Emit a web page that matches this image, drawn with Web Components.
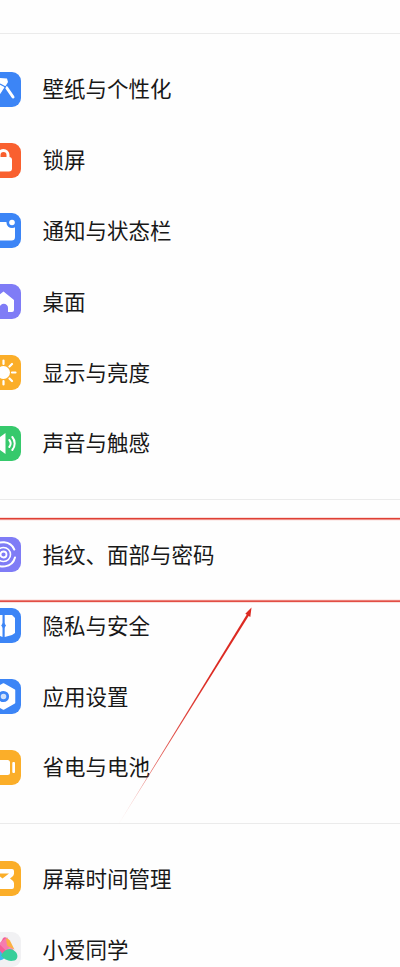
<!DOCTYPE html>
<html lang="zh-CN"><head><meta charset="utf-8"><title>设置</title>
<style>
html,body{margin:0;padding:0;background:#fff}
body{width:400px;height:967px;overflow:hidden;position:relative;font-family:"Noto Sans CJK SC","Noto Sans",sans-serif}
</style></head><body>
<settings-page>
  <settings-group top="33" before="20" after="20.2">
    <settings-row icon="brush" color="#3c85f6">壁纸与个性化</settings-row>
    <settings-row icon="lock" color="#f9602f">锁屏</settings-row>
    <settings-row icon="notify" color="#3c85f6">通知与状态栏</settings-row>
    <settings-row icon="home" color="#7f7cf6">桌面</settings-row>
    <settings-row icon="sun" color="#fbae29">显示与亮度</settings-row>
    <settings-row icon="sound" color="#36c96c">声音与触感</settings-row>
  </settings-group>
  <settings-group before="19.6" after="20.2">
    <settings-row icon="finger" color="#7f7cf6">指纹、面部与密码</settings-row>
    <settings-row icon="privacy" color="#3c85f6">隐私与安全</settings-row>
    <settings-row icon="apps" color="#3c85f6">应用设置</settings-row>
    <settings-row icon="battery" color="#fbae29">省电与电池</settings-row>
  </settings-group>
  <settings-group before="19.6" after="0">
    <settings-row icon="hourglass" color="#fbae29">屏幕时间管理</settings-row>
    <settings-row icon="xiaoai" color="#f1f1f3">小爱同学</settings-row>
  </settings-group>
  <call-out></call-out>
</settings-page>
<script>
const ICONS={
brush:`<path d="M20.500 15.500 27 25" stroke="#fff" stroke-width="3" stroke-linecap="round"/><path d="M4 5 21 6.500 22 10 15.500 21 4 27Z" fill="#fff"/><path d="M14 12 19.500 15" stroke="#3c85f6" stroke-width="1.300"/><path d="M15.200 21.500 20 14" stroke="#3c85f6" stroke-width="1.200"/>`,
lock:`<path d="M13 15V12a4.500 4.500 0 0 1 9 0V15" fill="none" stroke="#fff" stroke-width="3"/><rect x="9" y="14" width="17" height="14.500" rx="3" fill="#fff"/>`,
notify:`<rect x="4" y="9" width="25" height="18.500" rx="3.500" fill="#fff"/><circle cx="26" cy="9.500" r="5.500" fill="#3c85f6"/><circle cx="26" cy="9.500" r="2.800" fill="#fff"/>`,
home:`<path d="M17.500 7.500 28 16v10a2 2 0 0 1-2 2h-4v-4a4.200 4.200 0 0 0-8.400 0v4H9a2 2 0 0 1-2-2V16Z" fill="#fff"/>`,
sun:`<circle cx="17.500" cy="17.500" r="6.500" fill="#fff"/><path d="M17.500 5.500v3.500M17.500 26v3.500M5.500 17.500H9M26 17.500h3.500M9 9l2.500 2.500M23.500 23.500 26 26M9 26l2.500-2.500M23.500 11.500 26 9" stroke="#fff" stroke-width="2.200" stroke-linecap="round"/>`,
sound:`<path d="M5 12.500h7l7.500-5.500v21L12 22.500H5Z" fill="#fff"/><path d="M23.300 14a5.500 5.500 0 0 1 0 7M26.300 11a10 10 0 0 1 0 13" fill="none" stroke="#fff" stroke-width="2" stroke-linecap="round"/>`,
finger:`<circle cx="17.500" cy="17.500" r="3" fill="none" stroke="#fff" stroke-width="1.800"/><circle cx="17.500" cy="17.500" r="7" fill="none" stroke="#fff" stroke-width="1.600"/><path d="M7 11a12 12 0 0 1 21.300 1.500M29 20.500a12 12 0 0 1-22 3" fill="none" stroke="#fff" stroke-width="2" stroke-linecap="round"/>`,
privacy:`<path d="M16.500 7H7L5 9v10c0 5 6 8 11.500 10Z" fill="#fff"/><path d="M18.700 7H26l3 3v15l-3 2-7.300 2Z" fill="#fff"/><path d="M17.600 14 20 17.500 17.600 21 15.200 17.500Z" fill="#3c85f6"/>`,
apps:`<path d="M17.500 5 28.500 11.200V23.800L17.500 30 6.500 23.800V11.200Z" fill="#fff" stroke="#fff" stroke-width="1.500" stroke-linejoin="round"/><circle cx="17.500" cy="17.500" r="4.200" fill="#cfe0fb" stroke="#3c85f6" stroke-width="2.800"/>`,
battery:`<rect x="4" y="10" width="20" height="15" rx="2.500" fill="#fff"/><rect x="26.300" y="12" width="2.700" height="11" rx="1" fill="#fff"/>`,
hourglass:`<path d="M6 8h20a2 2 0 0 1 2 2v2.500a4 4 0 0 1-1.500 3l-2.500 2 2.500 2a4 4 0 0 1 1.500 3V26a2 2 0 0 1-2 2H6Z" fill="#fff"/><path d="M10 12.500H23L16.500 17.500Z" fill="#fbae29"/><path d="M6 18 14 18 6 24Z" fill="#fbae29"/>`,
xiaoai:`<g transform="translate(17.500 17.500) scale(1.220) translate(-17 -18)"><path d="M8 25 16.500 9q1.500-2 3.500 0l3 5-7 11Z" fill="#f45e97"/><path d="M13 13 20 8l8 16h-4Z" fill="#f57fb1" opacity=".9"/><path d="M5 21c3-4 7-4 10-1l3 5c-3 3-9 3-13-4Z" fill="#3db7f0"/><path d="M15 23c3-6 8-7 12-3 2 2 2 6-1 7-4 1-8 0-11-4Z" fill="#37cf9a"/><path d="M19 9c2 0 3 1 4 3l3 6-6-3Z" fill="#fbb043"/></g>`
};
function tpl(html){const t=document.createElement('template');t.innerHTML=html;return t;}

const pageT=tpl(`<style>:host{display:block;width:400px;height:967px;overflow:hidden;position:relative;background:#fefefe;color:#181818;font-family:"Noto Sans CJK SC","Noto Sans",sans-serif}</style><slot></slot>`);
customElements.define('settings-page',class extends HTMLElement{constructor(){super();this.attachShadow({mode:'open'}).append(pageT.content.cloneNode(true));}});

class Group extends HTMLElement{
  constructor(){super();this.attachShadow({mode:'open'});}
  connectedCallback(){
    const top=this.getAttribute('top')||0,b=this.getAttribute('before')||20,a=this.getAttribute('after')||0;
    this.shadowRoot.innerHTML=`<style>:host{display:block;margin-top:${top}px;border-top:1px solid #ebebeb;padding:${b}px 0 ${a}px}</style><slot></slot>`;
  }
}
customElements.define('settings-group',Group);

class Row extends HTMLElement{
  constructor(){super();this.attachShadow({mode:'open'});}
  connectedCallback(){
    const c=this.getAttribute('color'),i=ICONS[this.getAttribute('icon')]||'';
    this.shadowRoot.innerHTML=`<style>
    :host{display:flex;align-items:center;height:70.8px;margin-left:-14px}
    .ic{flex:none;width:35px;height:35px;border-radius:9px;background:${c};margin-right:21.5px;overflow:hidden}
    svg{display:block}
    .t{font-size:21.500px;line-height:30px;white-space:nowrap;position:relative;top:-1px}
    </style><div class="ic"><svg width="35" height="35" viewBox="0 0 35 35">${i}</svg></div><span class="t"><slot></slot></span>`;
  }
}
customElements.define('settings-row',Row);

class CallOut extends HTMLElement{
  constructor(){super();this.attachShadow({mode:'open'}).innerHTML=`<style>
  :host{position:absolute;inset:0;display:block;pointer-events:none}
  svg{position:absolute;left:0;top:0}
  </style><svg width="400" height="967" viewBox="0 0 400 967">
  <defs><linearGradient id="g" gradientUnits="userSpaceOnUse" x1="118" y1="825" x2="250" y2="610">
  <stop offset="0" stop-color="#e8706a" stop-opacity=".25"/><stop offset=".25" stop-color="#dc3a32" stop-opacity=".8"/><stop offset=".7" stop-color="#dc2a22"/><stop offset="1" stop-color="#dc2a22"/></linearGradient></defs>
  <rect x="0" y="517" width="400" height="3.500" fill="#f4a49c" opacity=".35"/>
  <rect x="0" y="599.400" width="400" height="3.500" fill="#f4a49c" opacity=".35"/>
  <rect x="0" y="518" width="400" height="1.500" fill="#df3f35"/>
  <rect x="0" y="600.400" width="400" height="1.500" fill="#df3f35"/>
  <path d="M118 825 248 612.500 250 613.700Z" fill="url(#g)"/>
  <path d="M251.500 607.500 250.300 617 245.300 613.800Z" fill="#dc2a22"/>
  </svg>`;}
}
customElements.define('call-out',CallOut);
</script>
</body></html>
